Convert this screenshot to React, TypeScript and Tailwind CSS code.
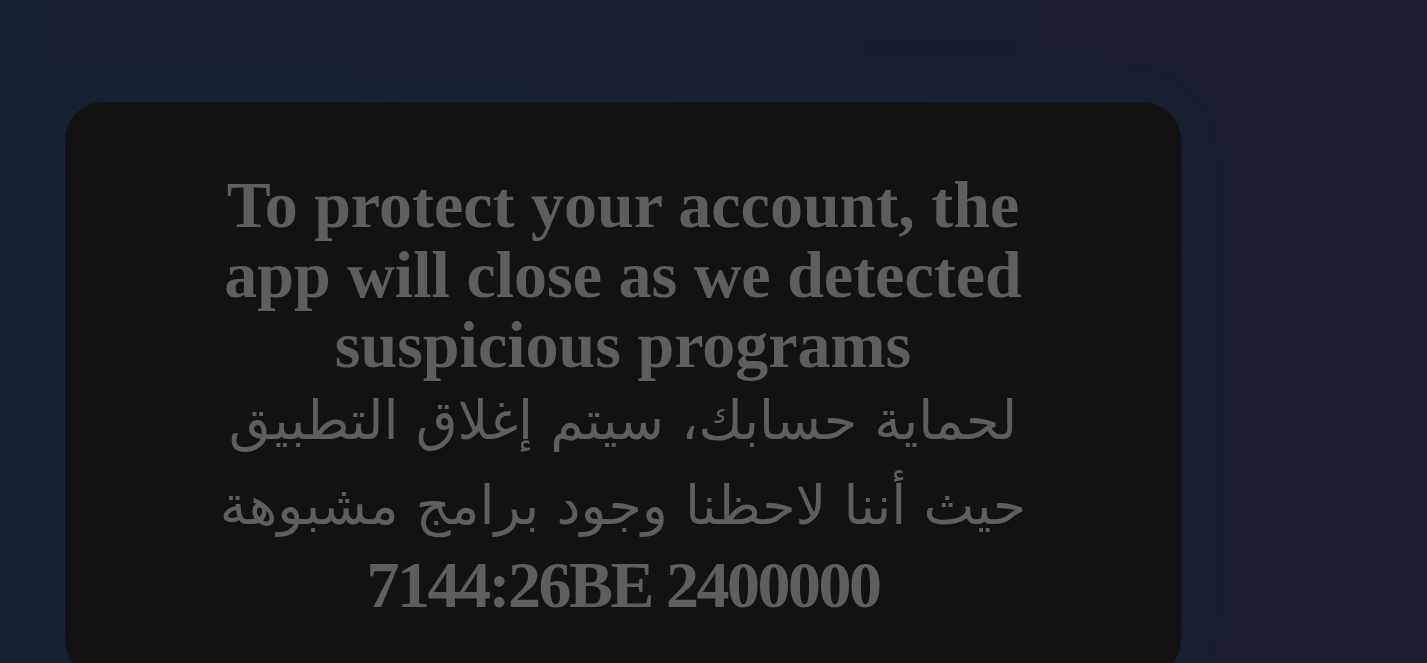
export default function App() {
  return (
    <div className="w-full h-[663px] overflow-hidden bg-gradient-to-r from-[#172031] to-[#1a1d2c]">
      <div className="pt-[102px] pl-[65px]">
        <div className="w-[1116px] h-[576px] rounded-[38px] bg-[#121212] shadow-[0_0_60px_rgba(20,40,60,0.45)] flex flex-col items-center pt-[68px] text-center text-[#5e5e5e]">
          <p
            className="w-[840px] text-[66px] leading-[70px] font-bold"
            style={{ fontFamily: '"Liberation Serif", "Times New Roman", serif' }}
          >
            To protect your account, the app will close as we detected suspicious programs
          </p>
          <p
            dir="rtl"
            className="w-[840px] -mt-[2px] text-[54px] leading-[85px]"
            style={{ fontFamily: '"DejaVu Sans", sans-serif' }}
          >
            لحماية حسابك، سيتم إغلاق التطبيق حيث أننا لاحظنا وجود برامج مشبوهة
          </p>
          <p
            className="-mt-[3px] text-[66px] leading-[80px] font-bold tracking-[-2.5px]"
            style={{ fontFamily: '"Liberation Serif", "Times New Roman", serif' }}
          >
            7144:26BE 2400000
          </p>
        </div>
      </div>
    </div>
  );
}
